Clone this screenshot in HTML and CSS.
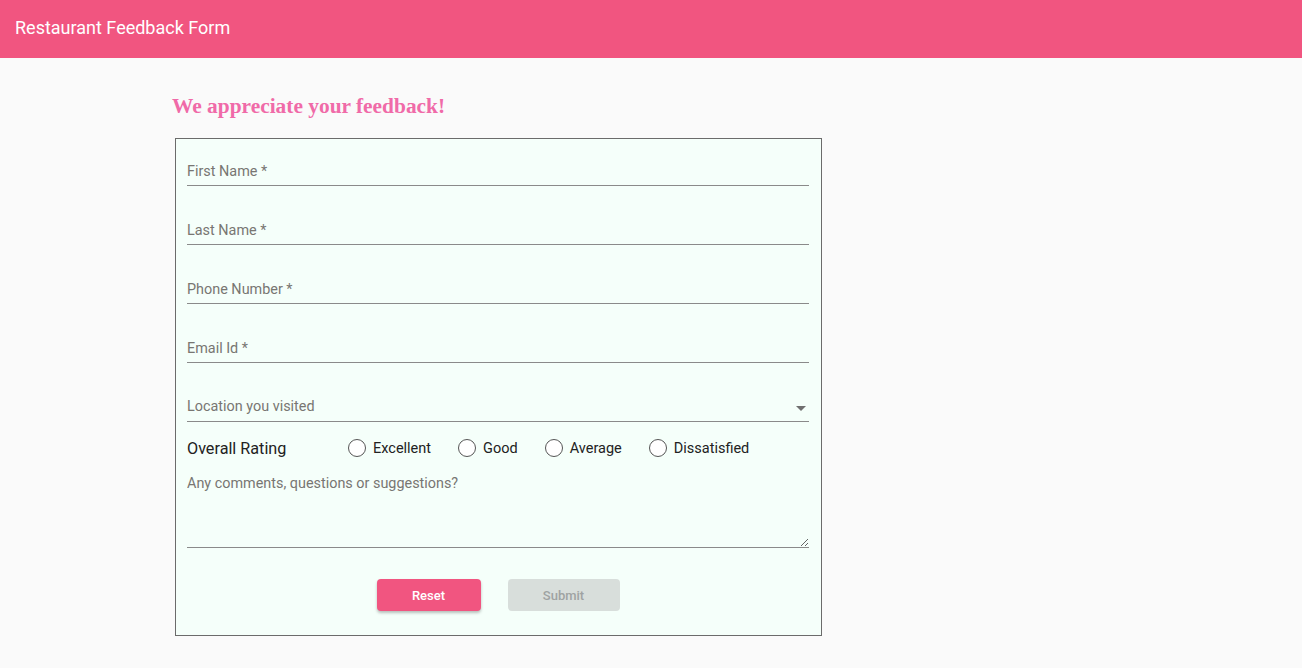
FILE: index.html
```html
<!DOCTYPE html>
<html>
<head>
<meta charset="utf-8">
<title>Restaurant Feedback Form</title>
<link rel="stylesheet" href="styles.css">
</head>
<body>
<header class="toolbar"><span class="toolbar-title">Restaurant Feedback Form</span></header>
<main class="page">
  <h1 class="heading">We appreciate your feedback!</h1>
  <form class="form">
    <div class="fields">
      <label class="field"><input class="input" type="text" placeholder="First Name *"></label>
      <label class="field"><input class="input" type="text" placeholder="Last Name *"></label>
      <label class="field"><input class="input" type="text" placeholder="Phone Number *"></label>
      <label class="field"><input class="input" type="text" placeholder="Email Id *"></label>
      <div class="field select">
        <span class="select-label">Location you visited</span>
        <span class="arrow"></span>
      </div>
    </div>
    <div class="rating">
      <span class="rating-label">Overall Rating</span>
      <div class="options">
        <label class="option"><span class="radio"></span>Excellent</label>
        <label class="option"><span class="radio"></span>Good</label>
        <label class="option"><span class="radio"></span>Average</label>
        <label class="option"><span class="radio"></span>Dissatisfied</label>
      </div>
    </div>
    <textarea class="comments" placeholder="Any comments, questions or suggestions?"></textarea>
    <div class="actions">
      <button type="button" class="btn reset">Reset</button>
      <button type="button" class="btn submit" disabled>Submit</button>
    </div>
  </form>
</main>
</body>
</html>
```
FILE: styles.css
```css
* { box-sizing: border-box; }
body {
  margin: 0;
  background: #fafafa;
  font-family: Roboto, "Liberation Sans", sans-serif;
}
.toolbar {
  height: 58px;
  background: #f15580;
  display: flex;
  align-items: center;
  padding-left: 15px;
  padding-bottom: 3px;
}
.toolbar-title {
  color: #fff;
  font-size: 18px;
  font-weight: 400;
}
.page {
  padding-left: 172px;
  padding-top: 35px;
}
.heading {
  margin: 0 0 19px 0;
  font-family: "Liberation Serif", "Times New Roman", serif;
  font-weight: bold;
  font-size: 21.4px;
  line-height: 26px;
  color: #f06aa8;
}
.form {
  margin-left: 3px;
  width: 647px;
  height: 498px;
  border: 1px solid #6b6b6b;
  background: #f5fffa;
  padding: 22px 12px 24px 11px;
  display: flex;
  flex-direction: column;
}
.fields {
  display: flex;
  flex-direction: column;
  gap: 34px;
}
.field {
  display: flex;
  align-items: center;
  height: 25px;
  padding-bottom: 4px;
  border-bottom: 1px solid #8a8a8a;
}
.input {
  width: 100%;
  border: 0;
  background: transparent;
  padding: 0;
  height: 20px;
  font-family: Roboto, "Liberation Sans", sans-serif;
  font-size: 14.4px;
  color: #333;
  outline: none;
}
.input::placeholder, .comments::placeholder { color: #787672; opacity: 1; }
.select { justify-content: space-between; }
.select-label {
  font-size: 14.4px;
  line-height: 20px;
  color: #787672;
}
.arrow {
  width: 0;
  height: 0;
  margin-right: 3px;
  margin-top: 2px;
  border-left: 5px solid transparent;
  border-right: 5px solid transparent;
  border-top: 5px solid #6f6f6f;
}
.rating {
  display: flex;
  align-items: center;
  height: 24px;
  margin-top: 14px;
}
.rating-label {
  width: 161px;
  font-size: 16.2px;
  color: #222;
}
.options {
  display: flex;
  gap: 27px;
}
.option {
  display: flex;
  align-items: center;
  gap: 7px;
  font-size: 14.5px;
  color: #222;
}
.radio {
  width: 18px;
  height: 18px;
  border: 1px solid #555;
  border-radius: 50%;
  background: #fff;
  display: inline-block;
}
.comments {
  margin-top: 14px;
  height: 74px;
  width: 100%;
  border: 0;
  border-bottom: 1px solid #8a8a8a;
  background: transparent;
  padding: 0;
  font-family: Roboto, "Liberation Sans", sans-serif;
  font-size: 14.4px;
  line-height: 20px;
  outline: none;
}
.actions {
  margin-top: 31px;
  display: flex;
  justify-content: center;
  gap: 27px;
}
.btn {
  height: 32px;
  border: 0;
  border-radius: 4px;
  font-family: Roboto, "Liberation Sans", sans-serif;
  font-size: 13px;
  font-weight: 500;
}
.reset {
  width: 104px;
  background: #f15580;
  color: #fff;
  box-shadow: 0 2px 3px rgba(0,0,0,0.25);
}
.submit {
  width: 112px;
  background: #d8dedb;
  color: #9fa3a2;
}
```
